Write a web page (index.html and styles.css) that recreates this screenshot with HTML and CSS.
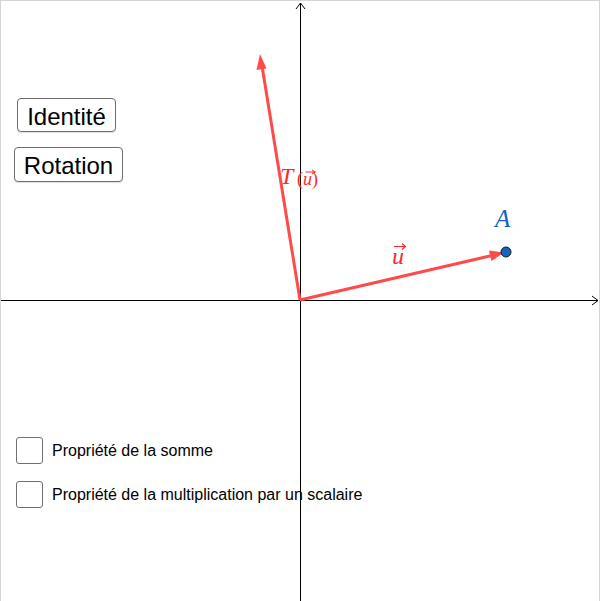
FILE: index.html
```html
<!DOCTYPE html>
<html lang="fr">
<head>
<meta charset="utf-8">
<link rel="stylesheet" href="styles.css">
</head>
<body>
<div class="applet">
  <svg class="canvas" width="600" height="601" viewBox="0 0 600 601">
    <!-- axes -->
    <line x1="0" y1="300.5" x2="598" y2="300.5" stroke="#000" stroke-width="1"/>
    <path d="M592 296 L598 300.5 L592 305" fill="none" stroke="#000" stroke-width="1"/>
    <line x1="300.5" y1="3" x2="300.5" y2="601" stroke="#000" stroke-width="1"/>
    <path d="M296 9 L300.5 3 L305 9" fill="none" stroke="#000" stroke-width="1"/>
    <!-- vector u -->
    <line x1="300" y1="300" x2="492" y2="255.5" stroke="#ff4a4a" stroke-width="3"/>
    <polygon points="504,252.5 489,250.5 491.5,261" fill="#ff4a4a"/>
    <!-- vector T(u) -->
    <line x1="300" y1="300" x2="262.5" y2="69" stroke="#ff4a4a" stroke-width="3"/>
    <polygon points="260,54 256.5,70 266.5,68.5" fill="#ff4a4a"/>
    <!-- point A -->
    <circle cx="506" cy="252" r="5" fill="#1565c0" stroke="#1a1a1a" stroke-width="1"/>
    <text class="lbl-a" x="495" y="227">A</text>
    <!-- label u -->
    <text class="lbl-u" x="392" y="264">u</text>
    <path d="M394 246.5 L405 246.5 M402 243.5 L405.5 246.5 L402 249.5" fill="none" stroke="#ff2a2a" stroke-width="1.2"/>
    <!-- label T(u) -->
    <text class="lbl-t" x="280" y="184">T</text>
    <text class="lbl-tp" x="297" y="185">(<tspan class="it">u</tspan>)</text>
    <path d="M305.5 172 L315 172 M312 170 L315.5 172 L312 174" fill="none" stroke="#ff2a2a" stroke-width="1"/>
  </svg>
  <button class="btn btn-id">Identité</button>
  <button class="btn btn-rot">Rotation</button>
  <label class="chk chk-1"><span class="box"></span><span class="chk-text">Propriété de la somme</span></label>
  <label class="chk chk-2"><span class="box"></span><span class="chk-text">Propriété de la multiplication par un scalaire</span></label>
</div>
</body>
</html>
```
FILE: styles.css
```css
html, body {
  margin: 0;
  padding: 0;
  background: #fff;
}
.applet {
  position: relative;
  width: 598px;
  height: 601px;
  border-left: 1px solid #d4d4d4;
  border-top: 1px solid #d4d4d4;
  border-right: 1px solid #d4d4d4;
  overflow: hidden;
  font-family: "Liberation Sans", Arial, sans-serif;
}
.canvas {
  position: absolute;
  left: -1px;
  top: -1px;
}
.lbl-a {
  font-family: "Liberation Serif", "Times New Roman", serif;
  font-style: italic;
  font-size: 25px;
  fill: #1565c0;
}
.lbl-u {
  font-family: "Liberation Serif", "Times New Roman", serif;
  font-style: italic;
  font-size: 24px;
  fill: #ff2a2a;
}
.lbl-t {
  font-family: "Liberation Serif", "Times New Roman", serif;
  font-style: italic;
  font-size: 24px;
  fill: #ff2a2a;
}
.lbl-tp {
  font-family: "Liberation Serif", "Times New Roman", serif;
  font-size: 18px;
  fill: #ff2a2a;
}
.lbl-tp .it {
  font-style: italic;
}
.btn {
  position: absolute;
  margin: 0;
  padding: 3px 0 0 0;
  background: #fff;
  border: 1px solid #6e6e6e;
  border-radius: 4px;
  font-family: "Liberation Sans", Arial, sans-serif;
  font-size: 24px;
  color: #000;
  line-height: 1;
  box-shadow: 0 1px 1px rgba(0,0,0,0.12);
}
.btn-id {
  left: 16px;
  top: 97px;
  width: 99px;
  height: 34px;
}
.btn-rot {
  left: 13px;
  top: 146px;
  width: 109px;
  height: 35px;
}
.chk {
  position: absolute;
  left: 15px;
  display: flex;
  align-items: center;
  gap: 9px;
  font-size: 16px;
  color: #000;
}
.chk-1 { top: 436px; }
.chk-2 { top: 480px; }
.box {
  width: 25px;
  height: 25px;
  border: 1px solid #707070;
  border-radius: 3px;
  background: #fff;
}
.chk-text {
  white-space: nowrap;
}
```
